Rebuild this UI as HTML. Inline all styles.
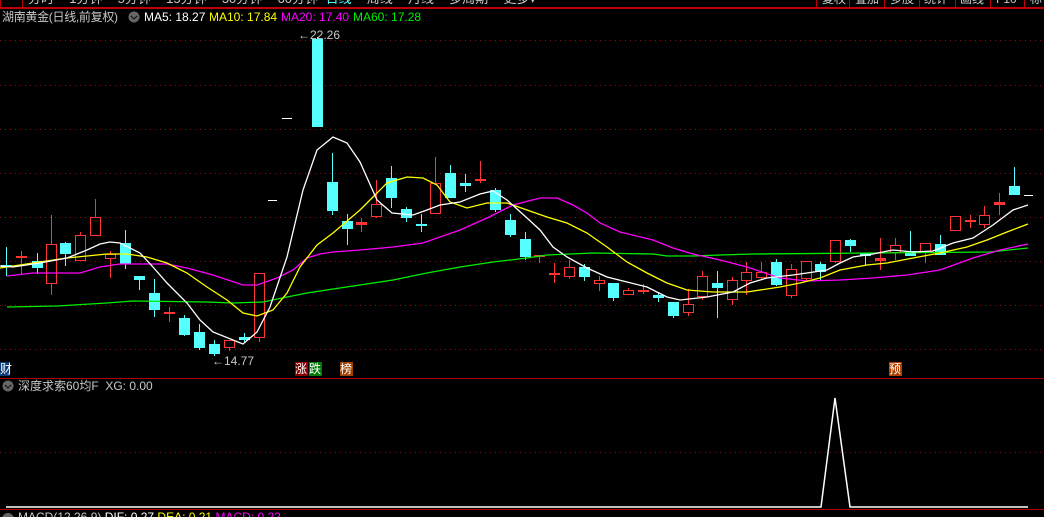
<!DOCTYPE html>
<html><head><meta charset="utf-8"><style>
html,body{margin:0;padding:0;background:#000;width:1044px;height:517px;overflow:hidden}
body{position:relative;font-family:"Liberation Sans","Noto Sans CJK SC",sans-serif}
.t{position:absolute;font-size:12px;white-space:nowrap;line-height:14px}
.g{color:#c8c8c8}
</style></head><body>
<svg id="s" width="1044" height="517" style="position:absolute;left:0;top:0" shape-rendering="crispEdges">
<g stroke="#8a1010" stroke-dasharray="1,4" stroke-width="1">
<line x1="0" y1="40.5" x2="1044" y2="40.5"/><line x1="0" y1="85.5" x2="1044" y2="85.5"/>
<line x1="0" y1="129.5" x2="1044" y2="129.5"/><line x1="0" y1="173.5" x2="1044" y2="173.5"/>
<line x1="0" y1="217.5" x2="1044" y2="217.5"/><line x1="0" y1="261.5" x2="1044" y2="261.5"/>
<line x1="0" y1="305.5" x2="1044" y2="305.5"/><line x1="0" y1="349.5" x2="1044" y2="349.5"/>
<line x1="0" y1="452.5" x2="1044" y2="452.5"/>
</g>
<g id="c"></g>
<g fill="none" stroke-width="1.3" shape-rendering="auto">
<polyline stroke="#00ee00" points="7,307 57,306 90,304 107,303 133,301 207,302 233,303 263,302 287,297 307,293 333,289 360,285 393,280 427,273 460,267 493,262 527,258 547,255 593,253 653,254 667,256 693,256 720,255 753,254 873,253 990,252 1028,248"/>
<polyline stroke="#ff00ff" points="7,276 33,273 80,273 100,267 120,264 167,264 187,268 213,275 243,285 257,285 277,278 293,270 307,258 320,254 333,252 360,250 393,247 423,243 460,230 487,218 513,205 540,198 557,198 573,205 587,213 600,223 620,232 653,240 673,248 693,254 720,260 747,267 780,278 807,281 840,280 873,278 907,275 940,270 973,258 1000,250 1028,244"/>
<polyline stroke="#ffff00" points="0,268 33,263 67,258 87,256 107,254 127,254 147,257 167,263 187,273 207,287 227,300 243,313 257,316 273,310 287,293 300,267 317,245 333,233 360,210 373,197 387,183 407,177 423,178 437,185 450,202 467,208 487,203 507,203 527,210 547,217 567,223 587,233 607,247 627,262 647,273 667,283 687,290 713,292 747,292 780,287 800,283 820,278 840,270 867,265 887,263 913,258 940,253 967,247 987,240 1007,232 1028,224"/>
<polyline stroke="#ffffff" points="0,266 13,267 40,263 67,258 87,250 100,244 110,242 120,243 140,253 153,267 167,283 187,303 200,320 213,332 243,344 257,332 270,307 287,257 303,190 317,150 333,137 347,143 360,162 377,200 392,213 413,215 427,210 440,205 460,202 480,194 493,191 507,200 527,218 540,230 553,247 567,257 587,268 607,277 627,282 647,287 667,297 680,300 707,297 733,292 750,283 767,278 793,275 807,273 827,270 840,263 853,257 873,254 893,250 913,252 933,251 953,243 973,238 993,225 1013,210 1028,205"/>
<polyline stroke="#ffffff" stroke-width="1.5" points="6,507 821,507 835,398 850,507 1028,507"/>
</g>
<rect x="0" y="0" width="1044" height="8" fill="#000"/>
<line x1="0" y1="8" x2="1044" y2="8" stroke="#c00000" stroke-width="2"/>
<rect x="0.5" y="-2" width="22" height="10" fill="none" stroke="#c00000"/>
<g stroke="#c00000"><line x1="816.5" y1="0" x2="816.5" y2="8"/><line x1="849.5" y1="0" x2="849.5" y2="8"/><line x1="884.5" y1="0" x2="884.5" y2="8"/><line x1="919.5" y1="0" x2="919.5" y2="8"/><line x1="955.5" y1="0" x2="955.5" y2="8"/><line x1="990.5" y1="0" x2="990.5" y2="8"/><line x1="1024.5" y1="0" x2="1024.5" y2="8"/></g>
<line x1="0" y1="378.5" x2="1044" y2="378.5" stroke="#b00000"/>
<line x1="0" y1="509.5" x2="1044" y2="509.5" stroke="#b00000"/>
<g stroke="#fff" stroke-width="1.3"><line x1="282" y1="118.5" x2="292" y2="118.5"/><line x1="268" y1="200.5" x2="277" y2="200.5"/><line x1="1024" y1="195.5" x2="1033" y2="195.5"/></g>
<rect x="0" y="362" width="10" height="14" fill="#0a3a7a"/>
<rect x="295" y="362" width="13" height="14" fill="#8a0000"/>
<rect x="309" y="362" width="13" height="14" fill="#007a00"/>
<rect x="340" y="362" width="13" height="14" fill="#a04000"/>
<rect x="889" y="362" width="13" height="14" fill="#b04000"/>
<circle cx="134" cy="17" r="5.5" fill="#666"/><path d="M131 16l3 3 3-3" stroke="#111" stroke-width="1.3" fill="none"/>
<circle cx="8" cy="386" r="5.5" fill="#666"/><path d="M5 385l3 3 3-3" stroke="#111" stroke-width="1.3" fill="none"/>
<circle cx="8" cy="519" r="6" fill="#666"/>
</svg>
<div style="position:absolute;left:0;top:0;width:1044px;height:7px;overflow:hidden">
<div class="t g" style="left:28px;top:-8px;font-size:13px;word-spacing:4px">分时 &nbsp;1分钟 &nbsp;5分钟 &nbsp;15分钟 &nbsp;30分钟 &nbsp;60分钟 <span style="color:#5ff">日线</span> &nbsp;周线 &nbsp;月线 &nbsp;多周期 &nbsp;更多▾</div>
<div class="t g" style="left:822px;top:-8px">复权</div><div class="t g" style="left:855px;top:-8px">叠加</div><div class="t g" style="left:890px;top:-8px">多股</div><div class="t g" style="left:924px;top:-8px">统计</div><div class="t g" style="left:960px;top:-8px">画线</div><div class="t g" style="left:996px;top:-8px">F10</div><div class="t g" style="left:1030px;top:-8px">标</div>
</div>
<div class="t g" style="left:2px;top:10px;font-size:12px;letter-spacing:-0.3px">湖南黄金(日线,前复权)</div>
<div class="t" style="left:144px;top:10px;color:#fff">MA5: 18.27</div>
<div class="t" style="left:209px;top:10px;color:#ffff00">MA10: 17.84</div>
<div class="t" style="left:281px;top:10px;color:#ff00ff">MA20: 17.40</div>
<div class="t" style="left:353px;top:10px;color:#00ee00">MA60: 17.28</div>
<div class="t g" style="left:298px;top:28px">←22.26</div>
<div class="t g" style="left:212px;top:354px">←14.77</div>
<div class="t" style="left:0px;top:362px;color:#fff">财</div>
<div class="t" style="left:295px;top:362px;color:#fff">涨</div>
<div class="t" style="left:309px;top:362px;color:#fff">跌</div>
<div class="t" style="left:340px;top:362px;color:#fff">榜</div>
<div class="t" style="left:889px;top:362px;color:#fff">预</div>
<div class="t g" style="left:18px;top:379px;font-size:12px">深度求索60均F&nbsp; XG: 0.00</div>
<div class="t g" style="left:18px;top:510px">MACD(12,26,9) <span style="color:#fff">DIF: 0.27</span> <span style="color:#ff0">DEA: 0.21</span> <span style="color:#f0f">MACD: 0.22</span></div>
<script>
var d=[[6,265,267,247,276,'c'],[21,256,258,251,275,'f'],[37,261,268,253,274,'c'],[51,244,283,215,295,'r'],[65,243,254,242,266,'c'],[80,235,260,232,260,'r'],[95,217,235,199,235,'r'],[110,254,258,251,278,'r'],[125,243,264,230,269,'c'],[139,276,280,276,290,'c'],[154,293,310,279,317,'c'],[169,312,314,307,322,'f'],[184,318,335,315,336,'c'],[199,332,348,324,350,'c'],[214,344,354,340,356,'c'],[229,340,347,340,351,'r'],[244,337,340,333,343,'c'],[259,273,337,273,342,'r'],[317,39,127,37,127,'c'],[332,182,211,153,215,'c'],[347,221,229,214,245,'c'],[361,222,225,218,232,'f'],[376,204,216,180,218,'r'],[391,178,198,166,208,'c'],[406,209,218,207,222,'c'],[421,224,225,214,232,'c'],[435,183,213,157,213,'r'],[450,173,198,165,198,'c'],[465,183,186,174,192,'c'],[480,179,180,161,183,'f'],[495,190,210,188,212,'c'],[510,220,235,214,237,'c'],[525,239,257,232,260,'c'],[539,255,256,255,263,'f'],[554,273,274,263,283,'f'],[569,267,276,260,279,'r'],[584,267,277,264,281,'c'],[599,280,283,276,291,'r'],[613,283,298,283,301,'c'],[628,290,294,288,295,'r'],[643,290,291,284,294,'f'],[658,295,298,292,302,'c'],[673,302,316,302,318,'c'],[688,304,312,289,316,'r'],[702,276,296,271,300,'r'],[717,283,288,271,318,'c'],[732,280,299,277,305,'r'],[746,272,280,262,295,'r'],[761,272,277,262,280,'r'],[776,262,285,259,286,'c'],[791,269,295,264,298,'r'],[806,261,278,261,281,'r'],[820,264,272,262,281,'c'],[835,240,261,240,263,'r'],[850,240,246,239,252,'c'],[865,253,256,253,266,'c'],[880,258,261,238,270,'f'],[895,245,252,238,260,'r'],[910,251,256,231,256,'c'],[925,243,252,243,263,'r'],[940,244,255,235,255,'c'],[955,216,230,216,230,'r'],[970,220,222,215,228,'f'],[984,215,224,206,228,'r'],[999,202,205,193,215,'f'],[1014,186,195,167,195,'c']];
var g=document.getElementById('c'),h='';
d.forEach(function(a){var x=a[0],col=a[5]=='c'?'#55ffff':'#ff3535';
h+='<line x1="'+(x+.5)+'" y1="'+a[3]+'" x2="'+(x+.5)+'" y2="'+a[4]+'" stroke="'+col+'"/>';
var hh=Math.max(a[2]-a[1],2);
if(a[5]=='r')h+='<rect x="'+(x-4.5)+'" y="'+(a[1]+.5)+'" width="10" height="'+hh+'" fill="#000" stroke="'+col+'" stroke-width="1.2"/>';
else h+='<rect x="'+(x-5)+'" y="'+a[1]+'" width="11" height="'+hh+'" fill="'+col+'"/>';});
g.innerHTML=h;
</script>
</body></html>
